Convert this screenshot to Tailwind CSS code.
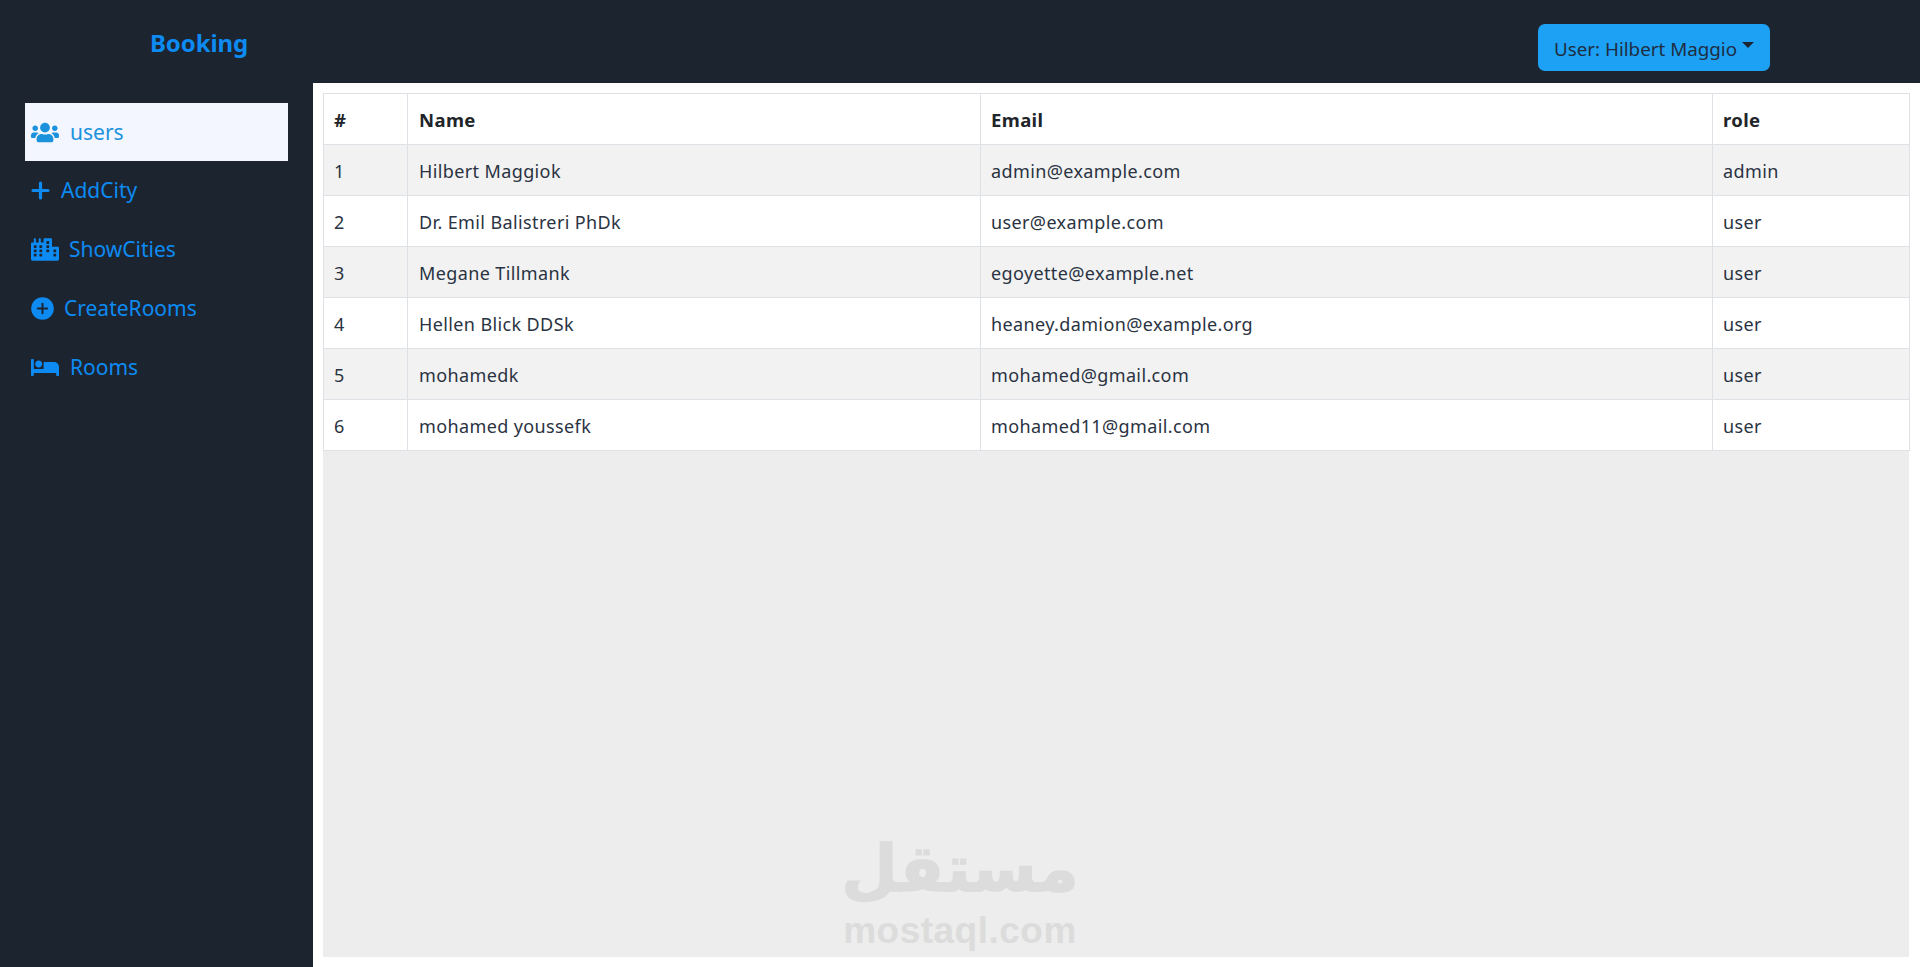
<!DOCTYPE html>
<html lang="en">
<head>
<meta charset="utf-8">
<title>Booking</title>
<script src="https://cdn.jsdelivr.net/npm/@tailwindcss/browser@4"></script>
</head>
<body class="bg-[#1c2430] font-['Noto_Sans',sans-serif] overflow-hidden">
<div class="relative flex flex-col h-[967px] w-[1920px]">
  <header class="flex items-start h-[83px] shrink-0">
    <div class="w-[313px] pt-[26px] pl-[150px] text-[24px] leading-[34px] font-bold text-[#0d8bf2] tracking-[-0.1px]">Booking</div>
    <button class="ml-[1225px] mt-[24px] flex items-center w-[232px] h-[47px] pl-[16px] pt-[3px] rounded-[7px] bg-[#1da1f5] text-[#1f2d40] text-[18.8px] whitespace-nowrap">User: Hilbert Maggio<span class="ml-[5px] mb-[8px] w-0 h-0 border-x-[6px] border-x-transparent border-t-[6px] border-t-[#1c2430]"></span></button>
  </header>
  <div class="flex flex-1 min-h-0">
    <aside class="w-[313px] shrink-0 pt-[20px] pl-[25px] pr-[25px]">
      <nav class="flex flex-col text-[21px] text-[#0d8bf2]">
        <a class="flex items-center h-[58px] pl-[6px] bg-[#f3f5ff] text-[#1c92dc]">
          <svg class="w-[28px] h-[23px] fill-current" viewBox="0 0 640 512"><path d="M96 224c35.3 0 64-28.7 64-64s-28.7-64-64-64-64 28.7-64 64 28.7 64 64 64zm448 0c35.3 0 64-28.7 64-64s-28.7-64-64-64-64 28.7-64 64 28.7 64 64 64zm32 32h-64c-17.6 0-33.5 7.1-45.1 18.6 40.3 22.1 68.9 62 75.1 109.4h66c17.7 0 32-14.3 32-32v-32c0-35.3-28.7-64-64-64zm-256 0c61.9 0 112-50.1 112-112S381.9 32 320 32 208 82.1 208 144s50.1 112 112 112zm76.8 32h-8.3c-20.8 10-43.9 16-68.5 16s-47.6-6-68.5-16h-8.3C179.6 288 128 339.6 128 403.2V432c0 26.5 21.5 48 48 48h288c26.5 0 48-21.5 48-48v-28.8c0-63.6-51.6-115.2-115.2-115.2zm-223.7-13.4C161.5 263.1 145.6 256 128 256H64c-35.3 0-64 28.7-64 64v32c0 17.7 14.3 32 32 32h65.9c6.3-47.4 34.9-87.3 75.2-109.4z"/></svg>
          <span class="ml-[11px] pt-[1px]">users</span>
        </a>
        <a class="flex items-center h-[59px] pl-[6px]">
          <svg class="w-[19px] h-[19px] stroke-current fill-none" viewBox="0 0 19 19" stroke-width="3.2" stroke-linecap="round"><path d="M9.5 2v15M2 9.5h15"/></svg>
          <span class="ml-[11px] pt-[1px]">AddCity</span>
        </a>
        <a class="flex items-center h-[59px] pl-[6px]">
          <svg class="w-[28px] h-[23px] fill-current" viewBox="0 0 640 512"><path d="M616 192H480V24c0-13.26-10.74-24-24-24H312c-13.26 0-24 10.74-24 24v72h-64V16c0-8.84-7.16-16-16-16h-16c-8.84 0-16 7.16-16 16v80h-64V16c0-8.84-7.16-16-16-16H80c-8.84 0-16 7.16-16 16v80H24c-13.26 0-24 10.74-24 24v360c0 17.67 14.33 32 32 32h576c17.67 0 32-14.33 32-32V216c0-13.26-10.74-24-24-24zM128 404c0 6.63-5.37 12-12 12H76c-6.63 0-12-5.37-12-12v-40c0-6.63 5.37-12 12-12h40c6.63 0 12 5.37 12 12v40zm0-96c0 6.63-5.37 12-12 12H76c-6.63 0-12-5.37-12-12v-40c0-6.63 5.37-12 12-12h40c6.63 0 12 5.37 12 12v40zm0-96c0 6.63-5.37 12-12 12H76c-6.63 0-12-5.37-12-12v-40c0-6.63 5.37-12 12-12h40c6.63 0 12 5.37 12 12v40zm128 192c0 6.63-5.37 12-12 12h-40c-6.63 0-12-5.37-12-12v-40c0-6.63 5.37-12 12-12h40c6.63 0 12 5.37 12 12v40zm0-96c0 6.63-5.37 12-12 12h-40c-6.63 0-12-5.37-12-12v-40c0-6.63 5.37-12 12-12h40c6.63 0 12 5.37 12 12v40zm0-96c0 6.63-5.37 12-12 12h-40c-6.63 0-12-5.37-12-12v-40c0-6.63 5.37-12 12-12h40c6.63 0 12 5.37 12 12v40zm160 96c0 6.63-5.37 12-12 12h-40c-6.63 0-12-5.37-12-12v-40c0-6.63 5.37-12 12-12h40c6.63 0 12 5.37 12 12v40zm0-96c0 6.63-5.37 12-12 12h-40c-6.63 0-12-5.37-12-12v-40c0-6.63 5.37-12 12-12h40c6.63 0 12 5.37 12 12v40zm0-96c0 6.63-5.37 12-12 12h-40c-6.63 0-12-5.37-12-12V76c0-6.63 5.37-12 12-12h40c6.63 0 12 5.37 12 12v40zm160 288c0 6.63-5.37 12-12 12h-40c-6.63 0-12-5.37-12-12v-40c0-6.63 5.37-12 12-12h40c6.63 0 12 5.37 12 12v40zm0-96c0 6.63-5.37 12-12 12h-40c-6.63 0-12-5.37-12-12v-40c0-6.63 5.37-12 12-12h40c6.63 0 12 5.37 12 12v40z"/></svg>
          <span class="ml-[10px] pt-[1px]">ShowCities</span>
        </a>
        <a class="flex items-center h-[59px] pl-[6px]">
          <svg class="w-[23px] h-[23px]" viewBox="0 0 23 23"><circle cx="11.5" cy="11.5" r="11.3" class="fill-current"/><path d="M11.5 6.8v9.4M6.8 11.5h9.4" stroke="#1c2430" stroke-width="2" stroke-linecap="round"/></svg>
          <span class="ml-[10px] pt-[1px]">CreateRooms</span>
        </a>
        <a class="flex items-center h-[58px] pl-[6px]">
          <svg class="w-[28px] h-[23px] fill-current" viewBox="0 0 640 512"><path d="M176 256c44.11 0 80-35.89 80-80s-35.89-80-80-80-80 35.89-80 80 35.89 80 80 80zm352-128H304c-8.84 0-16 7.16-16 16v144H64V80c0-8.84-7.16-16-16-16H16C7.16 64 0 71.16 0 80v352c0 8.84 7.16 16 16 16h32c8.84 0 16-7.16 16-16v-48h512v48c0 8.84 7.16 16 16 16h32c8.84 0 16-7.16 16-16V240c0-61.86-50.14-112-112-112z"/></svg>
          <span class="ml-[11px] pt-[1px]">Rooms</span>
        </a>
      </nav>
    </aside>
    <main class="flex-1 min-w-0 bg-white pt-[10px] pb-[10px] pl-[10px] pr-[11px] flex flex-col">
      <table class="w-[1586px] table-fixed border-collapse text-[18px] tracking-[0.38px] text-[#2a3342]">
        <colgroup><col class="w-[84px]"><col class="w-[573px]"><col class="w-[732px]"><col class="w-[197px]"></colgroup>
        <thead class="bg-white text-[#212529]">
          <tr class="h-[51px] text-left text-[18.5px]">
            <th class="border border-[#dee2e6] px-[10px] pt-[1px] font-bold">#</th><th class="border border-[#dee2e6] pl-[11px] pr-[10px] pt-[1px] font-bold">Name</th><th class="border border-[#dee2e6] px-[10px] pt-[1px] font-bold">Email</th><th class="border border-[#dee2e6] px-[10px] pt-[1px] font-bold">role</th>
          </tr>
        </thead>
        <tbody>
          <tr class="h-[51px] bg-[#f2f2f2]"><td class="border border-[#dee2e6] px-[10px] pt-[3px]">1</td><td class="border border-[#dee2e6] pl-[11px] pr-[10px] pt-[3px]">Hilbert Maggiok</td><td class="border border-[#dee2e6] px-[10px] pt-[3px]">admin@example.com</td><td class="border border-[#dee2e6] px-[10px] pt-[3px]">admin</td></tr>
          <tr class="h-[51px] bg-white"><td class="border border-[#dee2e6] px-[10px] pt-[3px]">2</td><td class="border border-[#dee2e6] pl-[11px] pr-[10px] pt-[3px]">Dr. Emil Balistreri PhDk</td><td class="border border-[#dee2e6] px-[10px] pt-[3px]">user@example.com</td><td class="border border-[#dee2e6] px-[10px] pt-[3px]">user</td></tr>
          <tr class="h-[51px] bg-[#f2f2f2]"><td class="border border-[#dee2e6] px-[10px] pt-[3px]">3</td><td class="border border-[#dee2e6] pl-[11px] pr-[10px] pt-[3px]">Megane Tillmank</td><td class="border border-[#dee2e6] px-[10px] pt-[3px]">egoyette@example.net</td><td class="border border-[#dee2e6] px-[10px] pt-[3px]">user</td></tr>
          <tr class="h-[51px] bg-white"><td class="border border-[#dee2e6] px-[10px] pt-[3px]">4</td><td class="border border-[#dee2e6] pl-[11px] pr-[10px] pt-[3px]">Hellen Blick DDSk</td><td class="border border-[#dee2e6] px-[10px] pt-[3px]">heaney.damion@example.org</td><td class="border border-[#dee2e6] px-[10px] pt-[3px]">user</td></tr>
          <tr class="h-[51px] bg-[#f2f2f2]"><td class="border border-[#dee2e6] px-[10px] pt-[3px]">5</td><td class="border border-[#dee2e6] pl-[11px] pr-[10px] pt-[3px]">mohamedk</td><td class="border border-[#dee2e6] px-[10px] pt-[3px]">mohamed@gmail.com</td><td class="border border-[#dee2e6] px-[10px] pt-[3px]">user</td></tr>
          <tr class="h-[51px] bg-white"><td class="border border-[#dee2e6] px-[10px] pt-[3px]">6</td><td class="border border-[#dee2e6] pl-[11px] pr-[10px] pt-[3px]">mohamed youssefk</td><td class="border border-[#dee2e6] px-[10px] pt-[3px]">mohamed11@gmail.com</td><td class="border border-[#dee2e6] px-[10px] pt-[3px]">user</td></tr>
        </tbody>
      </table>
      <div class="flex-1 w-[1586px] bg-[#ededed]"></div>
    </main>
  </div>
  <div class="absolute left-[845px] top-[825px] w-[230px] flex flex-col items-center text-[#dcdcdc]">
    <div dir="rtl" lang="ar" class="font-['DejaVu_Sans',sans-serif] font-bold text-[65px] leading-[88px] [-webkit-text-stroke:1.5px_#dcdcdc]">مستقل</div>
    <div class="font-['Liberation_Sans',sans-serif] font-bold text-[37px] leading-[36px] tracking-[0.5px]">mostaql.com</div>
  </div>
</div>
</body>
</html>
